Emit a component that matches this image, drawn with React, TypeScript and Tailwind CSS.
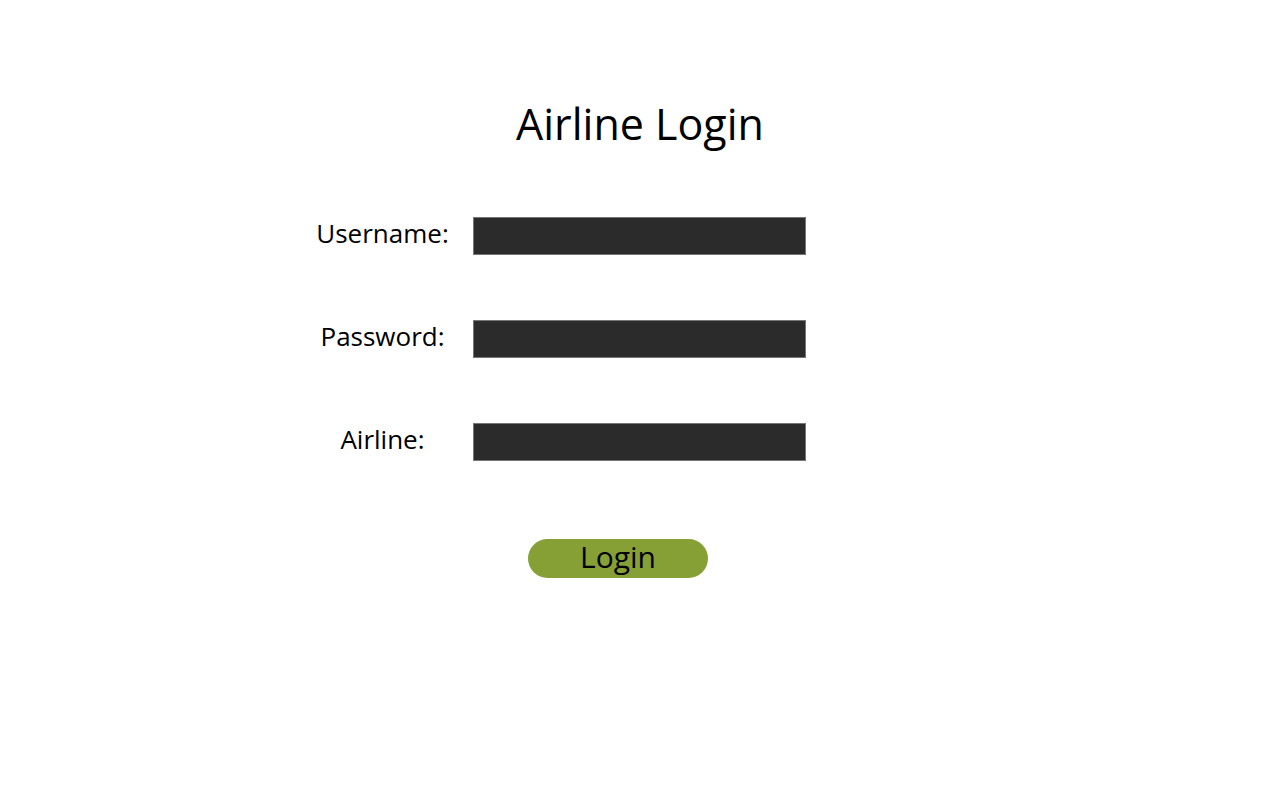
import React from "react";

const font = { fontFamily: '"Open Sans", "Noto Sans", sans-serif' };

function Row({ label }: { label: string }) {
  return (
    <div className="flex h-[38px] items-center">
      <div className="w-[165px] pb-[6px] text-center text-[26px] leading-[34px] text-black">{label}</div>
      <div className="ml-[8px] h-[38px] w-[333px] border border-[#767676] bg-[#2b2b2b]" />
    </div>
  );
}

export default function App() {
  return (
    <div className="min-h-[800px] w-full bg-white" style={font}>
      <div className="pt-[97px]">
        <h1 className="text-center text-[43px] leading-[54px] font-normal text-black">Airline Login</h1>
      </div>
      <div className="ml-[300px] mt-[66px] flex w-[636px] flex-col">
        <div className="flex flex-col gap-[65px]">
          <Row label="Username:" />
          <Row label="Password:" />
          <Row label="Airline:" />
        </div>
        <div className="mt-[78px] flex justify-center">
          <button className="flex h-[39px] w-[180px] items-center justify-center rounded-full bg-[#87a036] pb-[4px] text-[30px] leading-none text-black">
            Login
          </button>
        </div>
      </div>
    </div>
  );
}
